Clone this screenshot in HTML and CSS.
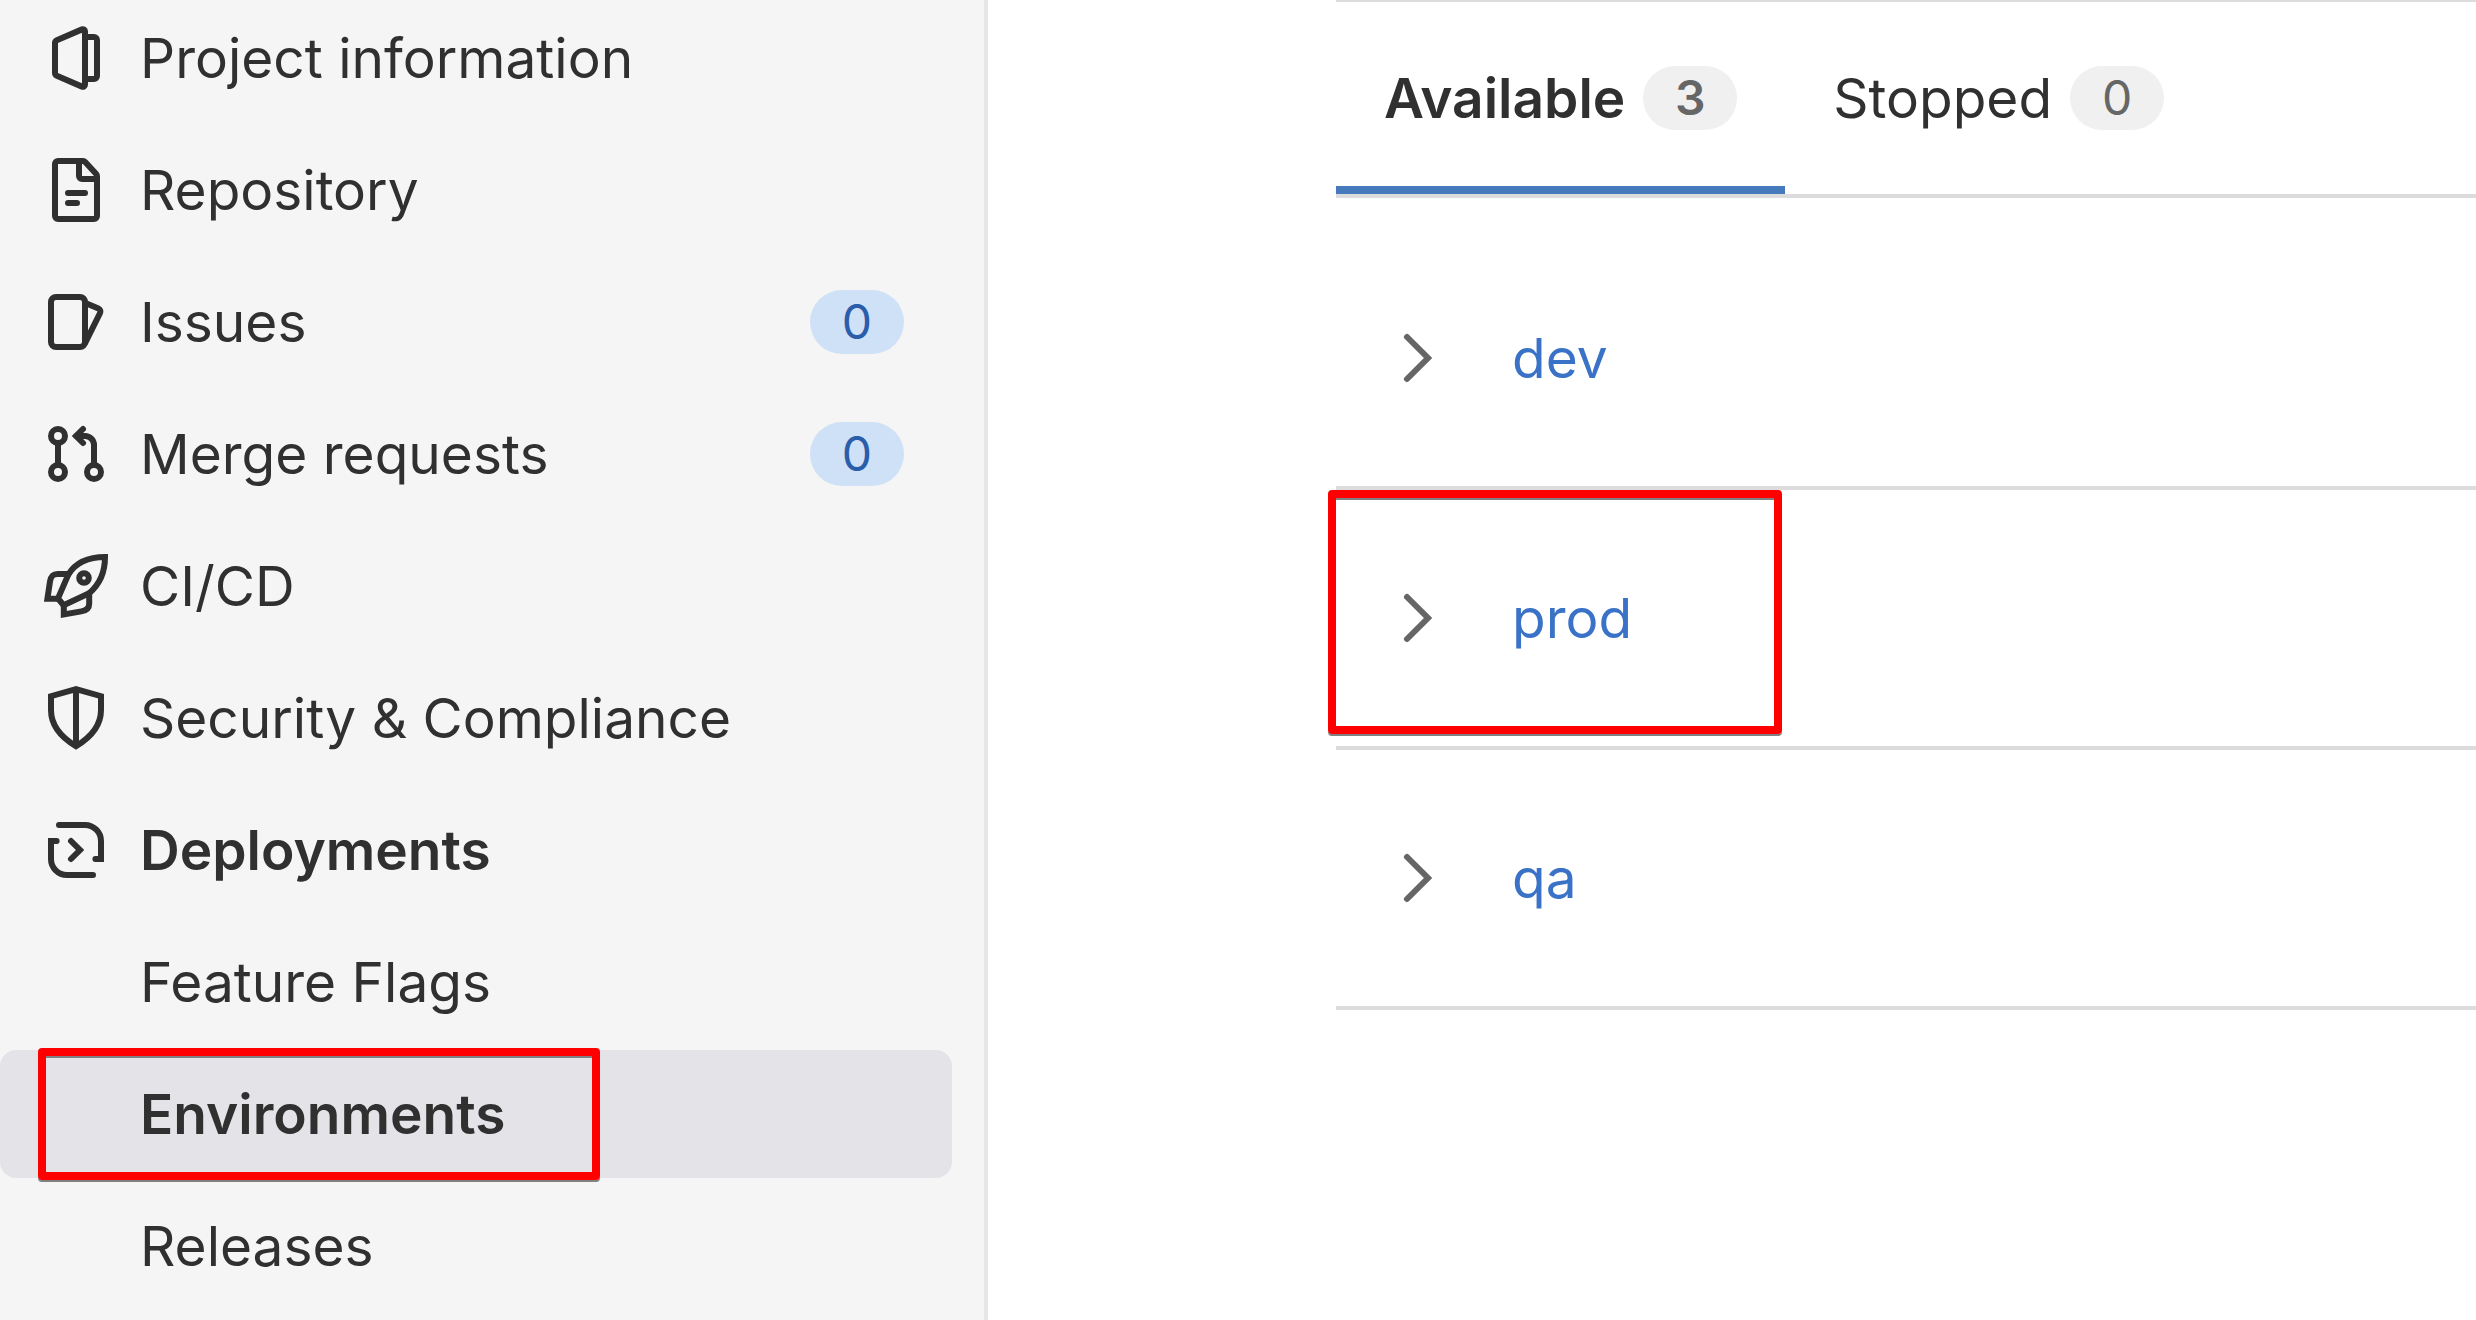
FILE: index.html
```html
<!DOCTYPE html>
<html lang="en">
<head>
<meta charset="utf-8">
<title>Environments</title>
<link rel="stylesheet" href="styles.css">
</head>
<body>
<div class="layout">
  <aside class="sidebar">
    <nav aria-label="Project">
      <ul class="nav">
        <li><a class="nav-link" href="#"><svg class="icon" viewBox="0 0 16 16" aria-hidden="true"><path d="M3.2 3.55 9.5.85a.55.55 0 0 1 .75.5v13.3a.55.55 0 0 1-.75.5L3.2 12.45a.75.75 0 0 1-.45-.7v-7.5a.75.75 0 0 1 .45-.7z"/><path d="M10.25 2.75h2.25a.75.75 0 0 1 .75.75v9a.75.75 0 0 1-.75.75h-2.25"/></svg><span>Project information</span></a></li>
        <li><a class="nav-link" href="#"><svg class="icon" viewBox="0 0 16 16" aria-hidden="true"><path d="M9.75.75H3.5a.75.75 0 0 0-.75.75v13c0 .4.35.75.75.75h9a.75.75 0 0 0 .75-.75V4.6a1 1 0 0 0-.25-.65L10.3 1a.8.8 0 0 0-.55-.25z"/><path d="M8.75 1v3.5c0 .4.35.75.75.75h3.7M6 8.75h4.25M6 11.25h2.25"/></svg><span>Repository</span></a></li>
        <li><a class="nav-link" href="#"><svg class="icon" viewBox="0 0 16 16" aria-hidden="true"><rect x="1.75" y="1.75" width="8.5" height="12.5" rx="1.25"/><path d="m10.5 3.3 3.1 1.35a.8.8 0 0 1 .4 1.15l-3.7 7.4"/></svg><span>Issues</span><span class="badge badge-info">0</span></a></li>
        <li><a class="nav-link" href="#"><svg class="icon" viewBox="0 0 16 16" aria-hidden="true"><circle cx="3.5" cy="3.5" r="1.75"/><circle cx="3.5" cy="12.5" r="1.75"/><circle cx="12.5" cy="12.5" r="1.75"/><path d="M3.5 5.25v5.5M8 3.5h2.25a2.25 2.25 0 0 1 2.25 2.25v5M9.75 1.75 8 3.5l1.75 1.75"/></svg><span>Merge requests</span><span class="badge badge-info">0</span></a></li>
        <li><a class="nav-link" href="#"><svg class="icon" viewBox="0 0 16 16" aria-hidden="true"><path d="M15.25.75C11 .75 8 2 6.1 5.1L3.5 11.1 4.9 12.8l6.4-3C13.9 7.6 15.25 4.4 15.25.75z"/><path d="M6.1 5H3.4C2.1 5 1.7 5.7 1.5 6.9L.85 11.2h2.6M4.95 12.8v2.3l4.4-.75c1.2-.2 1.95-.7 1.95-1.9V9.8"/><circle cx="10" cy="6" r="1.2"/></svg><span>CI/CD</span></a></li>
        <li><a class="nav-link" href="#"><svg class="icon" viewBox="0 0 16 16" aria-hidden="true"><path d="M8 .8 1.75 2.55V6c0 3.8 2.5 6.8 6.25 9.05C11.75 12.8 14.25 9.8 14.25 6V2.55zM8 1v14"/></svg><span>Security &amp; Compliance</span></a></li>
        <li><a class="nav-link nav-link-open" href="#"><svg class="icon" viewBox="0 0 16 16" aria-hidden="true"><path d="M3.75 1.75h6.5a4 4 0 0 1 4 4v4.5h-1.4M3.15 5.75h-1.4v4.5a4 4 0 0 0 4 4h6.5M6.75 5.75 9 8l-2.25 2.25"/></svg><span>Deployments</span></a>
          <ul class="nav subnav">
            <li><a class="nav-link" href="#">Feature Flags</a></li>
            <li class="marked"><a class="nav-link nav-link-active" href="#" aria-current="page">Environments</a><span class="marker marker-nav"></span></li>
            <li><a class="nav-link" href="#">Releases</a></li>
          </ul>
        </li>
      </ul>
    </nav>
  </aside>
  <main class="content">
    <div class="tabs" role="tablist">
      <button class="tab tab-active" type="button" role="tab" aria-selected="true">Available <span class="badge">3</span></button>
      <button class="tab" type="button" role="tab" aria-selected="false">Stopped <span class="badge">0</span></button>
    </div>
    <ul class="environments">
      <li class="environment">
        <button class="toggle" type="button" aria-label="Expand dev"><svg class="icon" viewBox="0 0 16 16" aria-hidden="true"><path d="m5.75 2.75 5.25 5.25-5.25 5.25"/></svg></button>
        <a class="environment-link" href="#">dev</a>
      </li>
      <li class="environment marked">
        <button class="toggle" type="button" aria-label="Expand prod"><svg class="icon" viewBox="0 0 16 16" aria-hidden="true"><path d="m5.75 2.75 5.25 5.25-5.25 5.25"/></svg></button>
        <a class="environment-link" href="#">prod</a>
        <span class="marker marker-environment"></span>
      </li>
      <li class="environment">
        <button class="toggle" type="button" aria-label="Expand qa"><svg class="icon" viewBox="0 0 16 16" aria-hidden="true"><path d="m5.75 2.75 5.25 5.25-5.25 5.25"/></svg></button>
        <a class="environment-link" href="#">qa</a>
      </li>
    </ul>
  </main>
</div>
</body>
</html>
```
FILE: styles.css
```css
* {
  box-sizing: border-box;
}

body {
  margin: 0;
  background: #fff;
  color: #303030;
  font: 400 55px/64px Inter, "Liberation Sans", sans-serif;
}

ul {
  margin: 0;
  padding: 0;
  list-style: none;
}

.layout {
  display: flex;
  min-height: 100vh;
  overflow: hidden;
}

.icon {
  display: block;
  flex: none;
  width: 64px;
  height: 64px;
  fill: none;
  stroke: currentColor;
  stroke-width: 1.5;
  stroke-linecap: round;
}

/* Sidebar */

.sidebar {
  flex: 0 0 988px;
  padding-right: 32px;
  border-right: 4px solid #e6e6e6;
  background: #f5f5f5;
}

.sidebar nav {
  margin-top: -6px;
}

.nav {
  display: flex;
  flex-direction: column;
  gap: 4px;
}

.subnav {
  margin-top: 4px;
}

.nav-link {
  display: flex;
  align-items: center;
  gap: 32px;
  min-height: 128px;
  padding: 0 48px 0 44px;
  border-radius: 16px;
  color: inherit;
  text-decoration: none;
}

.subnav .nav-link {
  padding-left: 140px;
}

.nav-link-open,
.nav-link-active {
  font-weight: 600;
}

.nav-link-active {
  background: #e4e3e8;
}

.badge {
  min-width: 94px;
  padding: 0 24px;
  border-radius: 32px;
  background: #f0f0f0;
  color: #666;
  font-size: 48px;
  line-height: 64px;
  text-align: center;
}

.badge-info {
  margin-left: auto;
  background: #cfe1f7;
  color: #2a5daa;
}

/* Environments */

.content {
  flex: 1;
  min-width: 0;
  padding-left: 348px;
}

.tabs {
  display: flex;
  border-top: 2px solid #dcdcdc;
  border-bottom: 4px solid #dcdcdc;
}

.tab {
  display: flex;
  align-items: center;
  gap: 18px;
  height: 192px;
  padding: 0 48px;
  border: 0;
  background: none;
  color: inherit;
  font: inherit;
}

.tab-active {
  box-shadow: inset 0 -8px #4779bd;
  font-weight: 600;
}

.environments {
  margin-top: 32px;
}

.environment {
  display: flex;
  align-items: center;
  gap: 64px;
  min-height: 260px;
  padding-left: 48px;
  border-bottom: 4px solid #dcdcdc;
}

.toggle {
  padding: 0;
  border: 0;
  background: none;
  color: #666;
}

.environment-link {
  color: #3972c6;
  text-decoration: none;
}

/* Red highlight frames laid over the rows */

.marked {
  position: relative;
}

.marker {
  position: absolute;
  border: 8px solid #f00;
  border-radius: 4px;
  box-shadow: 0 2px #808080, inset 0 2px #808080;
  pointer-events: none;
}

.marker-nav {
  top: -2px;
  left: 38px;
  width: 562px;
  height: 132px;
}

.marker-environment {
  top: 0;
  left: -8px;
  width: 454px;
  height: 244px;
}
```
